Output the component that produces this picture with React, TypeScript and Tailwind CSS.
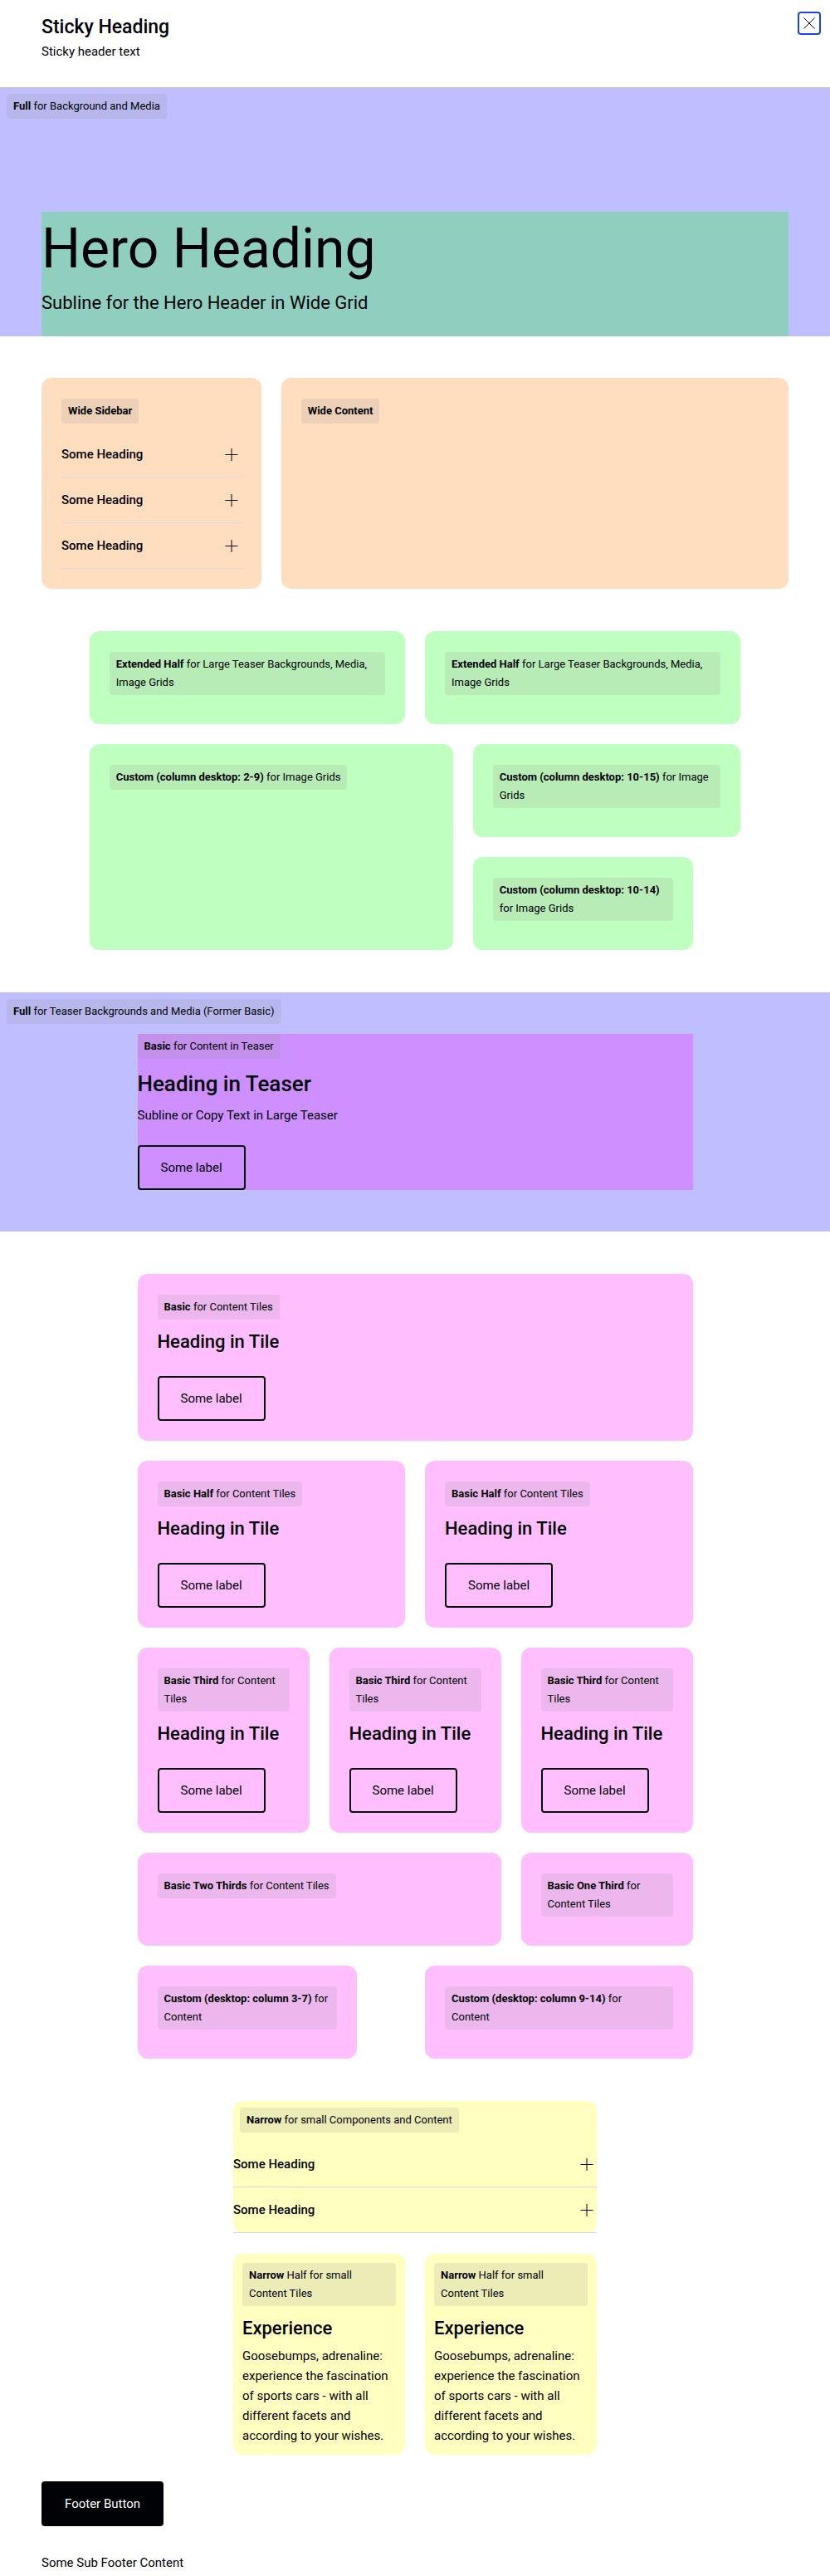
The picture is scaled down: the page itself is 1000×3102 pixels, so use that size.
import type { ReactNode } from "react";

function Tag({ name, children }: { name: string; children?: ReactNode }) {
  return (
    <p className="w-fit rounded-sm bg-[#949598]/18 px-2 py-1 text-[13px] leading-[22px]">
      <b className="font-bold">{name}</b>
      {children ? <> {children}</> : null}
    </p>
  );
}

function Grid({ className = "", children }: { className?: string; children: ReactNode }) {
  return <div className={`grid grid-cols-16 gap-x-6 px-[5%] ${className}`}>{children}</div>;
}

function Tile({ className, children }: { className: string; children: ReactNode }) {
  return (
    <div className={`min-h-28 min-w-0 rounded-xl px-6 pt-[25px] pb-6 ${className}`}>{children}</div>
  );
}

function OutlineButton({ children }: { children: ReactNode }) {
  return (
    <button
      type="button"
      className="block rounded-sm border-2 border-[#010205] px-[26px] py-[13px] text-[15px] leading-6"
    >
      {children}
    </button>
  );
}

function TileBody() {
  return (
    <>
      <h3 className="mt-2 mb-[22px] text-[22px] leading-[38px] font-medium">Heading in Tile</h3>
      <OutlineButton>Some label</OutlineButton>
    </>
  );
}

function AccordionItem() {
  return (
    <h3 className="border-b border-[#d8d8db]">
      <button
        type="button"
        aria-expanded="false"
        className="flex w-full items-center justify-between py-[15px] text-left text-[15px] leading-6 font-medium"
      >
        Some Heading
        <svg viewBox="0 0 24 24" className="size-6" aria-hidden="true">
          <path d="M4.5 12.5h15M12 5v15" stroke="#010205" strokeWidth="1" fill="none" />
        </svg>
      </button>
    </h3>
  );
}

function NarrowCard({ className }: { className: string }) {
  return (
    <div className={`rounded-xl bg-[#ffffbf] p-[11px] ${className}`}>
      <Tag name="Narrow">Half for small Content Tiles</Tag>
      <h3 className="mt-2 text-[22px] leading-[38px] font-medium">Experience</h3>
      <p className="mt-0.5 text-[15px] leading-6">
        Goosebumps, adrenaline: experience the fascination of sports cars - with all different facets
        and according to your wishes.
      </p>
    </div>
  );
}

export default function App() {
  return (
    <div className="bg-white font-[Roboto,'Liberation_Sans',sans-serif] text-[#010205]">
      <header className="relative px-[5%] pt-4 pb-[31px]">
        <h2 className="text-[23px] leading-[34px] font-medium">Sticky Heading</h2>
        <p className="text-[15px] leading-6">Sticky header text</p>
        <button
          type="button"
          aria-label="Close"
          className="absolute top-3.5 right-[11px] grid size-7 place-items-center rounded-sm border-2 border-[#1a44ea]"
        >
          <svg viewBox="0 0 24 24" className="size-6" aria-hidden="true">
            <path d="M5.5 5.5l13 13M18.5 5.5l-13 13" stroke="#010205" strokeWidth="1" fill="none" />
          </svg>
        </button>
      </header>

      <main>
        <section className="flex min-h-[300px] flex-col justify-between bg-[#bfbfff]">
          <div className="p-2">
            <Tag name="Full">for Background and Media</Tag>
          </div>
          <Grid>
            <div className="col-span-16 min-h-[150px] bg-[#90cfbf]">
              <h1 className="text-[66px] leading-[90px]">Hero Heading</h1>
              <p className="mt-0.5 text-[22px] leading-9">Subline for the Hero Header in Wide Grid</p>
            </div>
          </Grid>
        </section>

        <Grid className="mt-[50px]">
          <Tile className="col-span-5 bg-[#ffddbf]">
            <Tag name="Wide Sidebar" />
            <div className="mt-2.5">
              <AccordionItem />
              <AccordionItem />
              <AccordionItem />
            </div>
          </Tile>
          <Tile className="col-span-11 bg-[#ffddbf]">
            <Tag name="Wide Content" />
          </Tile>
        </Grid>

        <Grid className="mt-[51px] gap-y-6">
          <Tile className="col-span-7 col-start-2 bg-[#bfffbf]">
            <Tag name="Extended Half">for Large Teaser Backgrounds, Media, Image Grids</Tag>
          </Tile>
          <Tile className="col-span-7 col-start-9 bg-[#bfffbf]">
            <Tag name="Extended Half">for Large Teaser Backgrounds, Media, Image Grids</Tag>
          </Tile>
          <Tile className="col-span-8 col-start-2 row-span-2 bg-[#bfffbf]">
            <Tag name="Custom (column desktop: 2-9)">for Image Grids</Tag>
          </Tile>
          <Tile className="col-span-6 col-start-10 bg-[#bfffbf]">
            <Tag name="Custom (column desktop: 10-15)">for Image Grids</Tag>
          </Tile>
          <Tile className="col-span-5 col-start-10 bg-[#bfffbf]">
            <Tag name="Custom (column desktop: 10-14)">for Image Grids</Tag>
          </Tile>
        </Grid>

        <section className="mt-[51px] bg-[#bfbfff] pb-[50px]">
          <div className="px-2 pt-2 pb-3">
            <Tag name="Full">for Teaser Backgrounds and Media (Former Basic)</Tag>
          </div>
          <Grid>
            <div className="col-span-12 col-start-3 bg-[#ce8fff]">
              <Tag name="Basic">for Content in Teaser</Tag>
              <h2 className="mt-2 text-[26px] leading-[44px] font-medium">Heading in Teaser</h2>
              <p className="mt-1 mb-6 text-[15px] leading-6">Subline or Copy Text in Large Teaser</p>
              <OutlineButton>Some label</OutlineButton>
            </div>
          </Grid>
        </section>

        <Grid className="mt-[51px] gap-y-6">
          <Tile className="col-span-12 col-start-3 bg-[#ffbfff]">
            <Tag name="Basic">for Content Tiles</Tag>
            <TileBody />
          </Tile>
          <Tile className="col-span-6 col-start-3 bg-[#ffbfff]">
            <Tag name="Basic Half">for Content Tiles</Tag>
            <TileBody />
          </Tile>
          <Tile className="col-span-6 col-start-9 bg-[#ffbfff]">
            <Tag name="Basic Half">for Content Tiles</Tag>
            <TileBody />
          </Tile>
          <Tile className="col-span-4 col-start-3 bg-[#ffbfff]">
            <Tag name="Basic Third">for Content Tiles</Tag>
            <TileBody />
          </Tile>
          <Tile className="col-span-4 col-start-7 bg-[#ffbfff]">
            <Tag name="Basic Third">for Content Tiles</Tag>
            <TileBody />
          </Tile>
          <Tile className="col-span-4 col-start-11 bg-[#ffbfff]">
            <Tag name="Basic Third">for Content Tiles</Tag>
            <TileBody />
          </Tile>
          <Tile className="col-span-8 col-start-3 bg-[#ffbfff]">
            <Tag name="Basic Two Thirds">for Content Tiles</Tag>
          </Tile>
          <Tile className="col-span-4 col-start-11 bg-[#ffbfff]">
            <Tag name="Basic One Third">for Content Tiles</Tag>
          </Tile>
          <Tile className="col-span-5 col-start-3 bg-[#ffbfff]">
            <Tag name="Custom (desktop: column 3-7)">for Content</Tag>
          </Tile>
          <Tile className="col-span-6 col-start-9 flex flex-col bg-[#ffbfff] *:w-auto">
            <Tag name="Custom (desktop: column 9-14)">
              for
              <br />
              Content
            </Tag>
          </Tile>
        </Grid>

        <Grid className="mt-[51px] gap-y-[25px]">
          <div className="col-span-8 col-start-5 rounded-xl bg-[#ffffbf]">
            <div className="px-2 pt-2 pb-[11px]">
              <Tag name="Narrow">for small Components and Content</Tag>
            </div>
            <AccordionItem />
            <AccordionItem />
          </div>
          <NarrowCard className="col-span-4 col-start-5" />
          <NarrowCard className="col-span-4 col-start-9" />
        </Grid>
      </main>

      <footer className="px-[5%] pt-8">
        <button
          type="button"
          className="block rounded-sm border-2 border-[#010205] bg-[#010205] px-[26px] py-[13px] text-[15px] leading-6 text-white"
        >
          Footer Button
        </button>
        <p className="mt-8 pb-1 text-[15px] leading-6">Some Sub Footer Content</p>
      </footer>
    </div>
  );
}
